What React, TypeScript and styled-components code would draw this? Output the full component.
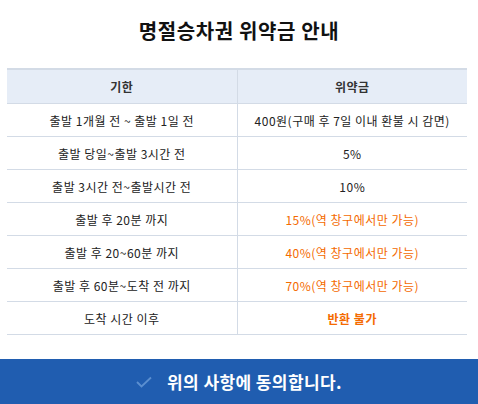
import React from "react";
import styled, { createGlobalStyle } from "styled-components";

const Global = createGlobalStyle`
  html, body { margin: 0; padding: 0; background: #fff; }
  body { font-family: "Noto Sans CJK KR", "Noto Sans", sans-serif; }
`;

const Page = styled.div`
  width: 478px;
  height: 404px;
  display: flex;
  flex-direction: column;
  overflow: hidden;
`;

const Title = styled.h1`
  margin: 0;
  height: 60px;
  display: flex;
  align-items: center;
  justify-content: center;
  font-size: 20px;
  font-weight: 700;
  color: #111;
  letter-spacing: 0.6px;
`;

const Body = styled.div`
  padding: 8px 11px 0 7px;
  flex: 1;
`;

const Table = styled.table`
  width: 460px;
  border-collapse: collapse;
  table-layout: fixed;
  border-top: 2px solid #d3dbe6;
`;

const Th = styled.th`
  height: 33px;
  padding: 0;
  background: #e6edf7;
  color: #333;
  font-size: 12px;
  font-weight: 700;
  letter-spacing: 0.5px;
  border-bottom: 1px solid #d3dbe6;
  & + & { border-left: 1px solid #d3dbe6; }
`;

const Td = styled.td<{ $orange?: boolean; $bold?: boolean }>`
  height: 32px;
  padding: 0;
  text-align: center;
  font-size: 12px;
  letter-spacing: 0.5px;
  color: ${(p) => (p.$orange ? "#f46a00" : "#222")};
  font-weight: ${(p) => (p.$bold ? 700 : 400)};
  border-bottom: 1px solid #d3dbe6;
  & + & { border-left: 1px solid #d3dbe6; }
`;

const AgreeBar = styled.button`
  height: 45px;
  width: 100%;
  border: 0;
  background: #205db0;
  color: #fff;
  display: flex;
  align-items: center;
  justify-content: center;
  gap: 15px;
  font-family: inherit;
  font-size: 17px;
  font-weight: 700;
  letter-spacing: 0.4px;
  padding: 0 0 0 0;
  cursor: pointer;
`;

const Check = styled.svg`
  width: 16px;
  height: 12px;
`;

const rows: { period: string; fee: string; orange?: boolean; bold?: boolean }[] = [
  { period: "출발 1개월 전 ~ 출발 1일 전", fee: "400원(구매 후 7일 이내 환불 시 감면)" },
  { period: "출발 당일~출발 3시간 전", fee: "5%" },
  { period: "출발 3시간 전~출발시간 전", fee: "10%" },
  { period: "출발 후 20분 까지", fee: "15%(역 창구에서만 가능)", orange: true },
  { period: "출발 후 20~60분 까지", fee: "40%(역 창구에서만 가능)", orange: true },
  { period: "출발 후 60분~도착 전 까지", fee: "70%(역 창구에서만 가능)", orange: true },
  { period: "도착 시간 이후", fee: "반환 불가", orange: true, bold: true },
];

export default function App() {
  return (
    <Page>
      <Global />
      <Title>명절승차권 위약금 안내</Title>
      <Body>
        <Table>
          <thead>
            <tr>
              <Th>기한</Th>
              <Th>위약금</Th>
            </tr>
          </thead>
          <tbody>
            {rows.map((r) => (
              <tr key={r.period}>
                <Td>{r.period}</Td>
                <Td $orange={r.orange} $bold={r.bold}>{r.fee}</Td>
              </tr>
            ))}
          </tbody>
        </Table>
      </Body>
      <AgreeBar>
        <Check viewBox="0 0 16 12">
          <path d="M1 6 L5.5 10.5 L15 1.5" fill="none" stroke="#5b8fd0" strokeWidth="1.8" />
        </Check>
        위의 사항에 동의합니다.
      </AgreeBar>
    </Page>
  );
}
